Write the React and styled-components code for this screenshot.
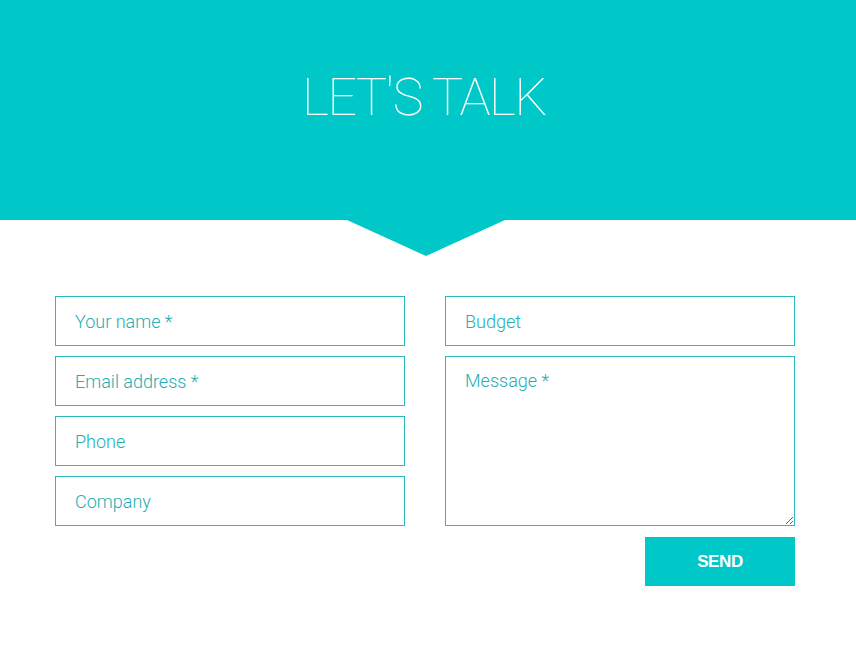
import React from "react";
import styled, { createGlobalStyle } from "styled-components";

const Global = createGlobalStyle`
  body {
    margin: 0;
    background: #ffffff;
    font-family: Roboto, "Liberation Sans", sans-serif;
  }
`;

const teal = "#00c8c8";
const line = "#2bb9bf";

const Header = styled.header`
  position: relative;
  height: 220px;
  background: ${teal};
  display: flex;
  justify-content: center;
  padding-top: 68px;
  box-sizing: border-box;

  &::after {
    content: "";
    position: absolute;
    left: 347px;
    top: 220px;
    width: 158px;
    height: 36px;
    background: ${teal};
    clip-path: polygon(0 0, 100% 0, 50% 100%);
  }
`;

const Title = styled.h1`
  margin: 0 8px 0 0;
  font-family: Roboto, sans-serif;
  font-weight: 100;
  font-size: 52px;
  line-height: 60px;
  color: #ffffff;
  letter-spacing: -1.5px;
`;

const Form = styled.form`
  display: grid;
  grid-template-columns: 350px 350px;
  column-gap: 40px;
  margin: 76px 0 0 55px;
`;

const Column = styled.div`
  display: flex;
  flex-direction: column;
  gap: 10px;
`;

const fieldStyle = `
  box-sizing: border-box;
  width: 100%;
  border: 1px solid ${line};
  border-radius: 0;
  background: #fff;
  font-family: Roboto, sans-serif;
  font-weight: 300;
  font-size: 18px;
  color: #22aeb4;
  padding: 0 19px;
  outline: none;
  &::placeholder {
    color: #22aeb4;
    opacity: 1;
  }
`;

const Input = styled.input`
  ${fieldStyle}
  height: 50px;
`;

const Message = styled.textarea`
  ${fieldStyle}
  height: 170px;
  padding-top: 13px;
  resize: vertical;
  display: block;
`;

const Actions = styled.div`
  display: flex;
  justify-content: flex-end;
  margin-top: 1px;
`;

const Send = styled.button`
  width: 150px;
  height: 49px;
  border: none;
  background: ${teal};
  color: #ffffff;
  font-family: "Liberation Sans", Arial, sans-serif;
  font-weight: 700;
  font-size: 17px;
  letter-spacing: -0.4px;
  text-transform: uppercase;
  cursor: pointer;
`;

export default function App() {
  return (
    <>
      <Global />
      <Header>
        <Title>LET'S TALK</Title>
      </Header>
      <Form onSubmit={(e) => e.preventDefault()}>
        <Column>
          <Input placeholder="Your name *" />
          <Input placeholder="Email address *" />
          <Input placeholder="Phone" />
          <Input placeholder="Company" />
        </Column>
        <Column>
          <Input placeholder="Budget" />
          <Message placeholder="Message *" />
          <Actions>
            <Send type="submit">Send</Send>
          </Actions>
        </Column>
      </Form>
    </>
  );
}
